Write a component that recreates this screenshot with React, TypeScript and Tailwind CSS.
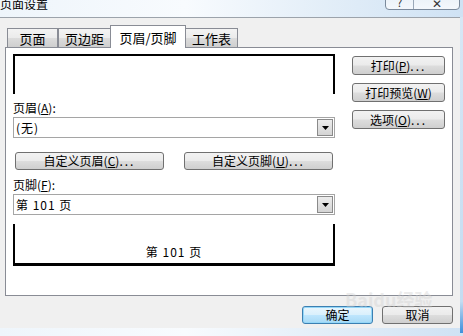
import React from "react";

const font = { fontFamily: '"Noto Sans CJK SC", "Liberation Sans", sans-serif' };

function Btn({ children, className = "" }: { children: React.ReactNode; className?: string }) {
  return (
    <div
      className={
        "flex items-center justify-center rounded-[3px] border border-[#707070] bg-[linear-gradient(180deg,#f2f2f2_0%,#ebebeb_48%,#dddddd_52%,#cfcfcf_100%)] text-[12px] leading-none text-black " +
        className
      }
    >
      {children}
    </div>
  );
}

function Dots() {
  return <span className="tracking-[2px]">...</span>;
}

function Combo({ text }: { text: string }) {
  return (
    <div className="flex h-[21px] items-center border border-[#a5a5a5] bg-white">
      <div className="flex-1 pl-[2px] text-[12px] leading-none tracking-[1px]">{text}</div>
      <div className="mr-[1px] flex h-[17px] w-[16px] items-center justify-center border border-[#8a8a8a] bg-[linear-gradient(180deg,#ececec,#d4d4d4)]">
        <svg width="7" height="4" viewBox="0 0 7 4">
          <path d="M0 0h7L3.5 4z" fill="#000" />
        </svg>
      </div>
    </div>
  );
}

function Tab({ label, w, active = false }: { label: string; w: number; active?: boolean }) {
  if (active) {
    return (
      <div
        className="relative z-10 -mb-px mx-[-1px] flex h-[23px] items-center justify-center border border-b-0 border-[#898c95] bg-white text-[13px] leading-none"
        style={{ width: w }}
      >
        {label}
      </div>
    );
  }
  return (
    <div
      className="flex h-[19px] items-center justify-center border border-b-0 border-[#898c95] bg-[linear-gradient(180deg,#f3f3f3_0%,#ebebeb_50%,#dcdcdc_51%,#cfcfcf_100%)] text-[13px] leading-none"
      style={{ width: w }}
    >
      {label}
    </div>
  );
}

export default function App() {
  return (
    <div
      className="relative h-[336px] w-[463px] overflow-hidden bg-[linear-gradient(90deg,#eef5fb_0%,#f8fbfe_40%,#e3eef8_70%,#cfe2f4_100%)] text-black"
      style={font}
    >
      {/* title bar */}
      <div className="h-[20px]">
        <div className="mt-[-3px] text-[12px] leading-[14px]">页面设置</div>
      </div>
      {/* caption buttons */}
      <div className="absolute left-[385px] top-[-10px] flex h-[20px] w-[75px] overflow-hidden rounded-b-[4px] border border-[#7b8a9c] bg-[linear-gradient(180deg,#e6eef6,#f4f8fc)]">
        <div className="flex w-[28px] items-end justify-center border-r border-[#9aa8b8] pb-[1px] text-[11px] leading-none text-[#333]">?</div>
        <div className="flex flex-1 items-end justify-center text-[12px] leading-none text-[#333]">✕</div>
      </div>

      <div className="flex">
        {/* client */}
        <div className="h-[311px] w-[460px] border-t border-[#9ca3ab] bg-[#f0f0f0]">
          {/* tabs */}
          <div className="ml-[7px] mt-[7px] flex h-[22px] items-end">
            <Tab label="页面" w={51} />
            <Tab label="页边距" w={53} />
            <Tab label="页眉/页脚" w={76} active />
            <Tab label="工作表" w={53} />
          </div>
          {/* panel */}
          <div className="ml-[5px] flex h-[249px] w-[448px] border border-[#898c95] bg-white pl-[7px] pt-[6px]">
            <div className="w-[322px]">
              <div className="h-[40px] border-x-2 border-t-2 border-black" />
              <div className="mt-[5px] h-[17px] text-[12px] leading-[17px]">
                页眉(<span className="underline">A</span>):
              </div>
              <div className="mt-[1px]">
                <Combo text="(无)" />
              </div>
              <div className="mt-[14px] flex">
                <Btn className="ml-[2px] h-[18px] w-[149px]">
                  自定义页眉(<span className="underline">C</span>)<Dots />
                </Btn>
                <Btn className="ml-[20px] h-[18px] w-[149px]">
                  自定义页脚(<span className="underline">U</span>)<Dots />
                </Btn>
              </div>
              <div className="mt-[6px] h-[17px] text-[12px] leading-[17px]">
                页脚(<span className="underline">F</span>):
              </div>
              <div className="mt-[1px]">
                <Combo text="第 101 页" />
              </div>
              <div className="mt-[9px] flex h-[42px] items-end justify-center border-x-2 border-b-[3px] border-black pb-[5px] text-[12px] leading-none tracking-[1px]">
                第 101 页
              </div>
            </div>
            <div className="ml-[17px] flex w-[93px] flex-col pt-[2px]">
              <Btn className="h-[19px]">
                打印(<span className="underline">P</span>)<Dots />
              </Btn>
              <Btn className="mt-[8px] h-[19px]">
                打印预览(<span className="underline">W</span>)
              </Btn>
              <Btn className="mt-[8px] h-[19px]">
                选项(<span className="underline">O</span>)<Dots />
              </Btn>
            </div>
          </div>
          {/* bottom buttons */}
          <div className="mr-[7px] mt-[10px] flex justify-end gap-[9px]">
            <div className="flex h-[18px] w-[71px] items-center justify-center rounded-[3px] border border-[#3c7fb1] bg-[linear-gradient(180deg,#eaf6fd_0%,#d9f0fc_50%,#bee6fd_51%,#a7d9f5_100%)] text-[12px] leading-none shadow-[inset_0_0_0_1px_#94d7f8]">
              确定
            </div>
            <Btn className="h-[18px] w-[71px]">取消</Btn>
          </div>
        </div>
        <div className="h-[316px] w-[3px] bg-[linear-gradient(180deg,#d7e7f5_0%,#c4dcf1_90%,#3d8fdc_100%)]" />
      </div>

      {/* watermark */}
      <div className="pointer-events-none absolute left-[345px] top-[290px] text-[18px] font-bold leading-none text-[#d0d0d0] opacity-40">
        Baidu经验
      </div>
    </div>
  );
}
